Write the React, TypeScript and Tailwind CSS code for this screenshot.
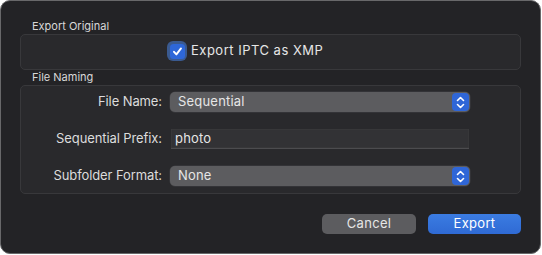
import React from "react";

const font = { fontFamily: "Inter, 'Liberation Sans', sans-serif" };

function Stepper() {
  return (
    <span className="absolute right-[1px] top-[1px] bottom-[1px] w-[17px] rounded-[4px] bg-[#2f66d7] flex items-center justify-center">
      <svg width="9" height="13" viewBox="0 0 9 13" fill="none">
        <path d="M1.5 4.5 L4.5 1.5 L7.5 4.5" stroke="white" strokeWidth="1.6" strokeLinecap="round" strokeLinejoin="round" />
        <path d="M1.5 8.5 L4.5 11.5 L7.5 8.5" stroke="white" strokeWidth="1.6" strokeLinecap="round" strokeLinejoin="round" />
      </svg>
    </span>
  );
}

function Select({ value }: { value: string }) {
  return (
    <div className="relative w-[300px] h-[20px] rounded-[5px] bg-[#5c5c5f] shadow-[0_0_0_0.5px_#3f3f42] flex items-center pl-[8px] text-[13px] tracking-[0.2px] text-[#e6e6e6]">
      {value}
      <Stepper />
    </div>
  );
}

function Row({ label, children }: { label: string; children: React.ReactNode }) {
  return (
    <div className="flex items-center h-[20px]">
      <div className="w-[141px] text-right text-[13px] tracking-[-0.1px] text-[#dcdcdc]">{label}</div>
      <div className="ml-[8px] flex">{children}</div>
    </div>
  );
}

export default function App() {
  return (
    <div className="w-[542px] h-[255px] bg-white" style={font}>
      <div className="w-[541px] h-[254px] rounded-[10px] border border-[#68686a] bg-[#232326] flex flex-col px-[19px]">
        <div className="mt-[18px] h-[15px] leading-[15px] text-[11px] text-[#d8d8d8] pl-[12px]">Export Original</div>
        <div className="h-[36px] rounded-[5px] border border-[#38383b] bg-[#29292c] pt-[6px] pl-[146px] flex items-start">
          <div className="flex items-center">
            <span className="w-[20px] h-[20px] rounded-[6px] bg-[#3a5a90] flex items-center justify-center">
              <span className="w-[15px] h-[15px] rounded-[3.5px] bg-[#2e67d8] flex items-center justify-center">
                <svg width="11" height="11" viewBox="0 0 11 11" fill="none">
                  <path d="M2 5.8 L4.4 8.4 L9 2.4" stroke="white" strokeWidth="1.9" strokeLinecap="round" strokeLinejoin="round" />
                </svg>
              </span>
            </span>
            <span className="ml-[4px] text-[13px] tracking-[0.5px] text-[#e6e6e6]">Export IPTC as XMP</span>
          </div>
        </div>
        <div className="h-[15px] leading-[15px] text-[11px] text-[#d8d8d8] pl-[12px]">File Naming</div>
        <div className="h-[109px] rounded-[5px] border border-[#38383b] bg-[#29292c] pt-[6px] flex flex-col gap-[17px]">
          <Row label="File Name:">
            <Select value="Sequential" />
          </Row>
          <Row label="Sequential Prefix:">
            <div className="ml-[1px] w-[298px] h-[20px] bg-[#323235] border-b border-[#4c4c4f] shadow-[inset_0_0_0_0.5px_#3c3c3f] flex items-center pl-[4px] text-[13px] tracking-[0.2px] text-[#e6e6e6]">
              photo
            </div>
          </Row>
          <Row label="Subfolder Format:">
            <Select value="None" />
          </Row>
        </div>
        <div className="mt-[20px] flex justify-end gap-[12px]">
          <div className="w-[94px] h-[20px] rounded-[5px] bg-[#5c5c5f] flex items-center justify-center text-[13px] tracking-[0.3px] text-[#e6e6e6]">Cancel</div>
          <div className="w-[93px] h-[20px] rounded-[5px] bg-gradient-to-b from-[#3b7ce2] to-[#2f6ad4] flex items-center justify-center text-[13px] tracking-[0.3px] text-white">Export</div>
        </div>
      </div>
    </div>
  );
}
